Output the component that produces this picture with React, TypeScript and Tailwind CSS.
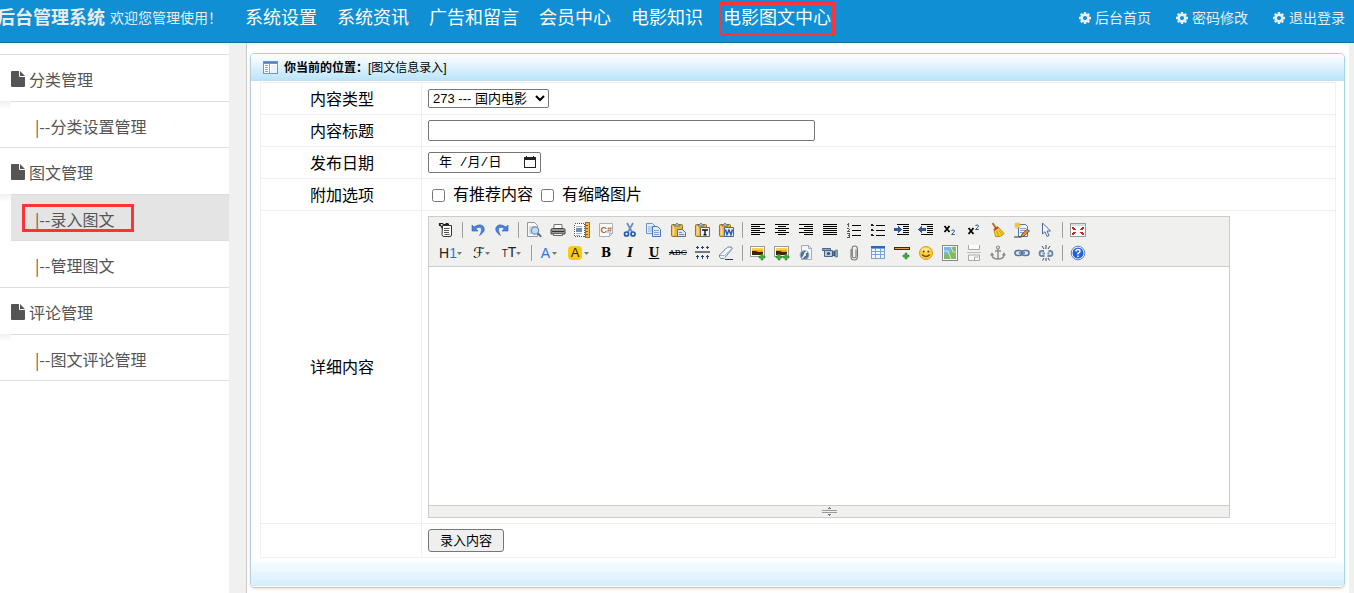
import type { ReactNode } from 'react';
import clsx from 'clsx';

const NAV = ['系统设置', '系统资讯', '广告和留言', '会员中心', '电影知识', '电影图文中心'];
const ACTIONS = ['后台首页', '密码修改', '退出登录'];
const MENU = [
  { title: '分类管理', items: ['分类设置管理'] },
  { title: '图文管理', items: ['录入图文', '管理图文'] },
  { title: '评论管理', items: ['图文评论管理'] },
];
const ACTIVE_NAV = '电影图文中心';
const ACTIVE_ITEM = '录入图文';

function Svg({ children, crisp = false }: { children: ReactNode; crisp?: boolean }) {
  return (
    <svg viewBox="0 0 16 16" className="w-4 h-4 block" fill="none" shapeRendering={crisp ? 'crispEdges' : 'auto'} aria-hidden="true">
      {children}
    </svg>
  );
}

function CogIcon() {
  return (
    <svg viewBox="0 128 1536 1536" className="w-3 h-3" fill="currentColor" aria-hidden="true">
      <path d="M1024 896q0-106-75-181t-181-75-181 75-75 181 75 181 181 75 181-75 75-181zm512-109v222q0 12-8 23t-20 13l-185 28q-19 54-39 91 35 50 107 138 10 12 10 25t-9 23q-27 37-99 108t-94 71q-12 0-26-9l-138-108q-44 23-91 38-16 136-29 186-7 28-36 28h-222q-14 0-24.5-8.5t-11.5-21.5l-28-184q-49-16-90-37l-141 107q-10 9-25 9-14 0-25-11-126-114-165-168-7-10-7-23 0-12 8-23 15-21 51-66.5t54-70.5q-27-50-41-99l-183-27q-13-2-21-12.5t-8-23.5v-222q0-12 8-23t19-13l186-28q14-46 39-92-40-57-107-138-10-12-10-24 0-10 9-23 26-36 98.5-107.5t94.5-71.5q13 0 26 10l138 107q44-23 91-38 16-136 29-186 7-28 36-28h222q14 0 24.5 8.5t11.5 21.5l28 184q49 16 90 37l142-107q9-9 24-9 13 0 25 10 129 119 165 170 7 8 7 22 0 12-8 23-15 21-51 66.5t-54 70.5q26 50 41 98l183 28q13 2 21 12.5t8 23.5z" />
    </svg>
  );
}

function FileIcon() {
  return (
    <svg viewBox="0 0 14 16" className="w-3.5 h-4" fill="currentColor" aria-hidden="true">
      <path d="M0 1Q0 0 1 0H8V5Q8 6 9 6H14V15Q14 16 13 16H1Q0 16 0 15ZM9 0.2Q9.5 0.4 10 1L13 4Q13.6 4.5 13.8 5H9Z" />
    </svg>
  );
}

function PanelIcon() {
  return (
    <svg viewBox="0 0 15 13" className="w-[15px] h-[13px]" shapeRendering="crispEdges" aria-hidden="true">
      <rect width="15" height="13" fill="#6d97d0" />
      <rect x="1" y="3" width="13" height="9" fill="#fff" />
      <rect x="1" y="1" width="13" height="1" fill="#4d7cc4" />
      <path fill="#7fa3cf" d="M2 4h3v1H2zM2 6h3v1H2zM2 8h3v1H2zM2 10h3v1H2zM6 3h1v9H6z" />
      <rect x="8" y="4" width="6" height="8" fill="#eaf2fb" />
    </svg>
  );
}

const clipboard = (
  <>
    <rect x="1.5" y="2.5" width="11" height="12" rx="1" fill="#e8b53c" stroke="#9a7420" />
    <rect x="2.5" y="4" width="2" height="9" fill="#f8dc86" />
    <path d="M4 4V2.5h1.5Q7 0 8.5 2.5H10V4z" fill="#c9cdd3" stroke="#6b6f76" />
  </>
);

const photo = (
  <>
    <rect x="0.5" y="1.5" width="14" height="10" fill="#fff" stroke="#9a9a9a" />
    <rect x="2" y="3" width="11" height="7" fill="#f2a71c" />
    <rect x="2" y="3" width="11" height="2" fill="#fbd251" />
    <path d="M2 6h4l2 1h5v3H2z" fill="#3d2408" />
  </>
);

const plus = (x: number, y: number) => (
  <path d={`M${x + 2} ${y}h2v2h2v2h-2v2h-2v-2h-2v-2h2z`} fill="#3fae3a" stroke="#1f7a20" strokeWidth="0.5" />
);

const lines = (rows: [number, number][], step = 2, top = 2) => (
  <>
    {rows.map(([x, w], i) => (
      <rect key={i} x={x} y={top + i * step} width={w} height="1" fill="#000" />
    ))}
  </>
);

const chain = (
  <g stroke="#5a769e" strokeWidth="1.6">
    <rect x="1" y="5.5" width="7" height="5" rx="2.5" fill="#dce6f2" />
    <rect x="8" y="5.5" width="7" height="5" rx="2.5" fill="#dce6f2" />
    <path d="M5 8h6" />
  </g>
);

const undo = (
  <path d="M2 3v6h6L5.7 6.8Q8 4.5 10.5 5.5Q13 7.5 9.5 13.5Q15.5 9.5 14 5.5Q11.5 0.5 4 5z" fill="#4b82dc" stroke="#2e5fb5" strokeWidth="0.6" />
);

type Tool = { name: string; icon: ReactNode; width?: string } | null;

function Caret() {
  return (
    <svg viewBox="0 0 5 3" className="w-[5px] h-[3px] shrink-0" aria-hidden="true">
      <path d="M0 0h5L2.5 3z" fill="#777" />
    </svg>
  );
}

const ROW1: Tool[] = [
  {
    name: '源代码',
    icon: (
      <Svg>
        <path d="M4.500 3.500h9v9.500q0 1.500-1.500 1.500H6q-2 0-2-2z" fill="#fff" stroke="#333" />
        <path d="M1.500 1.500l3 5M1.500 4V1.500h3l2 2M6 2.500h5M7.500 1.500h3" stroke="#222" strokeWidth="1.2" />
        <path d="M6 6.500h5.500M6 8.500h5M6 10.500h5M6.500 12.500h5" stroke="#555" />
      </Svg>
    ),
  },
  null,
  { name: '后退', icon: <Svg>{undo}</Svg> },
  { name: '前进', icon: <Svg><g transform="translate(16 0) scale(-1 1)">{undo}</g></Svg> },
  null,
  {
    name: '预览',
    icon: (
      <Svg>
        <path d="M1.500 0.500h7l3 3v11h-10z" fill="#f8fafc" stroke="#8e9aab" />
        <path d="M3 5h5M3 7h3M3 9h3M3 11h3" stroke="#a9b8cc" />
        <circle cx="9" cy="8.5" r="3.7" fill="#c3dcf5" stroke="#7088a8" strokeWidth="1.2" />
        <path d="M11.800 11.300l3.400 3.500" stroke="#5d7190" strokeWidth="2" />
      </Svg>
    ),
  },
  {
    name: '打印',
    icon: (
      <Svg>
        <path d="M4 2.500h8v5H4z" fill="#fff" stroke="#777" />
        <path d="M1 8q0-1.500 1.500-1.500h11Q15 6.500 15 8v4H1z" fill="#999" stroke="#444" />
        <path d="M2 9.500h12" stroke="#333" />
        <path d="M3.500 11.500h9v2h-9z" fill="#eee" stroke="#666" />
      </Svg>
    ),
  },
  {
    name: '插入模板',
    icon: (
      <Svg crisp>
        <rect x="0" y="1" width="11" height="14" fill="#fff" />
        <rect x="0.5" y="1.5" width="10" height="13" stroke="#555" strokeDasharray="1 1" />
        <path d="M2 4h6v1H2zM2 11h6v1H2zM2 13h4v1H2z" fill="#9db4d4" />
        <rect x="2" y="6" width="6" height="4" fill="#6d8fc0" />
        <rect x="11.5" y="0.5" width="4" height="15" fill="#f2b74a" stroke="#a8701c" />
        <path d="M12 3h2v1h-2zM12 6h2v1h-2zM12 9h2v1h-2zM12 12h2v1h-2z" fill="#8a5a14" />
      </Svg>
    ),
  },
  {
    name: '插入程序代码',
    icon: (
      <Svg>
        <path d="M1.500 1.500h13v10l-3 3h-10z" fill="#fbfbfb" stroke="#a8b0ba" />
        <path d="M14.500 11.500h-3v3" stroke="#a8b0ba" />
        <text x="2.5" y="10.5" fontSize="9" fontWeight="700" fill="#a4652a" fontFamily="Liberation Sans, sans-serif">C#</text>
      </Svg>
    ),
  },
  {
    name: '剪切',
    icon: (
      <Svg>
        <path d="M5 1l5 9M11 1L6 10" stroke="#6f8fc0" strokeWidth="1.8" />
        <circle cx="4.5" cy="12" r="2" stroke="#2559b0" strokeWidth="1.7" />
        <circle cx="11" cy="12" r="2" stroke="#2559b0" strokeWidth="1.7" />
      </Svg>
    ),
  },
  {
    name: '复制',
    icon: (
      <Svg>
        <path d="M0.500 1.500h6l3 3v7h-9z" fill="#e4eefb" stroke="#6a93cf" />
        <path d="M2 5h5M2 7h4M2 9h4" stroke="#8fb0de" />
        <path d="M6.500 4.500h5l3 3v7h-8z" fill="#e4eefb" stroke="#4474bd" />
        <path d="M8 8.500h5M8 10.500h5M8 12.500h5" stroke="#7ba1d8" />
      </Svg>
    ),
  },
  {
    name: '粘贴',
    icon: (
      <Svg>
        {clipboard}
        <path d="M7.500 7.500h5l3 3v4h-8z" fill="#dce5ef" stroke="#5d7186" />
        <path d="M9 10.500h3M9 12.500h5" stroke="#7d92aa" />
      </Svg>
    ),
  },
  {
    name: '粘贴为无格式文本',
    icon: (
      <Svg>
        {clipboard}
        <path d="M6.500 5.500h9v9h-9z" fill="#f0f2f5" stroke="#666" />
        <path d="M8 8h6M11 7.500v5.500M9.500 12.800h3" stroke="#111" strokeWidth="1.4" />
      </Svg>
    ),
  },
  {
    name: '从Word粘贴',
    icon: (
      <Svg>
        {clipboard}
        <path d="M6.500 5.500h9v9h-9z" fill="#e9f1fd" stroke="#3e68ad" />
        <path d="M7.500 7.500l1.500 5L11 8l2 4.500 1.500-5" stroke="#2458b4" strokeWidth="1.5" />
      </Svg>
    ),
  },
  null,
  { name: '左对齐', icon: <Svg crisp>{lines([[1, 14], [1, 9], [1, 14], [1, 9], [1, 14], [1, 9]])}</Svg> },
  { name: '居中', icon: <Svg crisp>{lines([[1, 14], [4, 8], [1, 14], [4, 8], [1, 14], [4, 8]])}</Svg> },
  { name: '右对齐', icon: <Svg crisp>{lines([[1, 14], [6, 9], [1, 14], [6, 9], [1, 14], [6, 9]])}</Svg> },
  { name: '两端对齐', icon: <Svg crisp>{lines([[1, 14], [1, 14], [1, 14], [1, 14], [1, 14], [1, 14]])}</Svg> },
  {
    name: '编号',
    icon: (
      <Svg crisp>
        {lines([[6, 9], [6, 9], [6, 9]], 5, 3)}
        <path fill="#555" d="M2 1h1v4H2zM1 2h1v1H1zM1 6h2v1H1zM3 7h1v1H3zM2 8h1v1H2zM1 9h3v1H1zM1 11h3v1H1zM2 13h2v1H2zM3 12h1v3H3zM1 15h3v1H1z" />
      </Svg>
    ),
  },
  {
    name: '项目符号',
    icon: (
      <Svg crisp>
        {lines([[6, 9], [6, 9], [6, 9]], 5, 3)}
        <path fill="#222" d="M1 2h2v1H1zM1 3h3v1H1zM1 7h2v1H1zM1 8h3v1H1zM1 12h2v1H1zM1 13h3v1H1z" />
      </Svg>
    ),
  },
  {
    name: '增加缩进',
    icon: (
      <Svg crisp>
        {lines([[3, 12], [9, 6], [9, 6], [9, 6], [9, 6], [3, 12]])}
        <path d="M0 6h4V4l4 3.500L4 11V9H0z" fill="#33599a" />
      </Svg>
    ),
  },
  {
    name: '减少缩进',
    icon: (
      <Svg crisp>
        {lines([[3, 12], [9, 6], [9, 6], [9, 6], [9, 6], [3, 12]])}
        <path d="M8 6H4V4L0 7.500 4 11V9h4z" fill="#33599a" />
      </Svg>
    ),
  },
  {
    name: '下标',
    icon: (
      <Svg>
        <path d="M2.500 4l5 6M7.500 4l-5 6" stroke="#000" strokeWidth="1.8" />
        <path d="M9.500 9q0-1 1.500-1t1.500 1q0 1-3 3.500h3.200" stroke="#33599a" />
      </Svg>
    ),
  },
  {
    name: '上标',
    icon: (
      <Svg>
        <path d="M2.500 6l5 6M7.500 6l-5 6" stroke="#000" strokeWidth="1.8" />
        <path d="M9.500 4q0-1 1.500-1t1.500 1q0 1-3 3.500h3.200" stroke="#33599a" />
      </Svg>
    ),
  },
  {
    name: '清理HTML代码',
    icon: (
      <Svg>
        <path d="M2.500 1l4 6" stroke="#b2702a" strokeWidth="2" />
        <path d="M4 8l4-3 6 6.500Q11 15.500 5.500 14.500z" fill="#f5cf2c" stroke="#b98f12" />
        <path d="M4 8l4-3" stroke="#c8382a" strokeWidth="2" />
        <path d="M7 9l1.500 5M9 8.500l3 4" stroke="#c79c17" />
      </Svg>
    ),
  },
  {
    name: '一键排版',
    icon: (
      <Svg>
        <path d="M4.500 2.500h7l2 2v10h-9z" fill="#eef4fb" stroke="#5873a0" />
        <path d="M6 6.500h6M6 8.500h6M6 10.500h4" stroke="#88a2c9" />
        <path d="M3.500 0v7M0 3.500h7M1 1l5 5M6 1L1 6" stroke="#f3c93a" strokeWidth="1.4" />
        <path d="M15.500 9l-5.500 5-3 1 1-3 5-4.500z" fill="#e98f3a" stroke="#6f3d18" strokeWidth="0.8" />
        <path d="M0 15h7" stroke="#333" />
      </Svg>
    ),
  },
  {
    name: '全选',
    icon: (
      <Svg>
        <path d="M4.500 1v11l2.500-2.300 2 4.800 2-1-2-4.500h3.500z" fill="#f4f8fe" stroke="#506a96" />
      </Svg>
    ),
  },
  null,
  {
    name: '全屏显示',
    icon: (
      <Svg crisp>
        <rect x="0.5" y="1.5" width="15" height="13" fill="#fff" stroke="#999" />
        <rect x="1" y="2" width="14" height="2" fill="#dcdcdc" />
        <path fill="#c8272d" d="M2 5h2v1h1v1h1v1H3V7H2zM14 5h-2v1h-1v1h-1v1h3V7h1zM2 13h2v-1h1v-1h1v-1H3v1H2zM14 13h-2v-1h-1v-1h-1v-1h3v1h1z" />
      </Svg>
    ),
  },
];

const ROW2: Tool[] = [
  {
    name: '段落',
    width: 'w-[33px]',
    icon: (
      <span className="flex items-center text-[14px] leading-4 font-['Liberation_Sans',sans-serif] text-[#222]">
        <span>H<span className="text-[#2f74dd]">1</span></span>
        <Caret />
      </span>
    ),
  },
  {
    name: '字体',
    width: 'w-[29px]',
    icon: (
      <span className="flex items-center text-[15px] leading-4 font-['DejaVu_Sans',sans-serif] text-[#111]">
        ℱ<Caret />
      </span>
    ),
  },
  {
    name: '文字大小',
    width: 'w-[31px]',
    icon: (
      <span className="flex items-center leading-4 font-['Liberation_Sans',sans-serif] text-[#222]">
        <span className="text-[14px]"><span className="text-[10px]">T</span>T</span>
        <Caret />
      </span>
    ),
  },
  null,
  {
    name: '文字颜色',
    width: 'w-7',
    icon: (
      <span className="flex items-center gap-0.5 text-[14px] leading-4 font-['Liberation_Sans',sans-serif] text-[#2f74dd]">
        A<Caret />
      </span>
    ),
  },
  {
    name: '文字背景',
    width: 'w-[31px]',
    icon: (
      <span className="flex items-center gap-0.5 text-[13px] font-['Liberation_Sans',sans-serif] text-[#222]">
        <span className="w-3.5 h-3.5 leading-[14px] text-center rounded-sm bg-[#ffc90e]">A</span>
        <Caret />
      </span>
    ),
  },
  { name: '粗体', icon: <b className="block text-[12px] leading-4 font-['DejaVu_Serif',serif] text-black text-center">B</b> },
  { name: '斜体', icon: <b className="block text-[12px] leading-4 italic font-['DejaVu_Serif',serif] text-black text-center">I</b> },
  { name: '下划线', icon: <b className="block text-[12px] leading-4 underline font-['DejaVu_Serif',serif] text-black text-center">U</b> },
  { name: '删除线', icon: <s className="block text-[8px] leading-4 font-['DejaVu_Serif',serif] text-black text-center">ABC</s> },
  {
    name: '行距',
    icon: (
      <Svg crisp>
        <rect x="1" y="6" width="15" height="2" fill="#777" />
        <path fill="#2d4468" d="M2 2h3v1H2zM3 1h1v3H3zM7 2h3v1H7zM8 1h1v3H8zM12 2h3v1h-3zM13 1h1v3h-1zM2 11h3v1H2zM3 10h1v4H3zM7 11h3v1H7zM8 10h1v4H8zM12 11h3v1h-3zM13 10h1v4h-1z" />
      </Svg>
    ),
  },
  {
    name: '删除格式',
    icon: (
      <Svg>
        <path d="M1.500 10l7-7q1-1 2.500-1h2q1.500 0.500 1 2l-7 8.500q-.5 1-2 1H3Q.8 12.500 1.500 10z" fill="#f4f7fc" stroke="#6680ad" />
        <path d="M2 10.500h4.500L14 3.500" stroke="#9db0d0" />
        <path d="M7 14.500h8" stroke="#333" />
      </Svg>
    ),
  },
  null,
  { name: '图片', icon: <Svg>{photo}{plus(9, 9)}</Svg> },
  { name: '批量图片上传', icon: <Svg>{photo}{plus(2, 9)}{plus(9, 9)}</Svg> },
  {
    name: 'Flash',
    icon: (
      <Svg>
        <path d="M3.500 0.500h7l3 3v11h-10z" fill="#f4f6f9" stroke="#a2aab5" />
        <path d="M10.500 0.500v3h3" stroke="#a2aab5" />
        <circle cx="6.5" cy="10" r="4.5" fill="#4f7199" stroke="#a9bacd" />
        <path d="M9 7q-2 0-2.500 2.500T4 13M5.500 10H8" stroke="#fff" strokeWidth="1.3" />
      </Svg>
    ),
  },
  {
    name: '视音频',
    icon: (
      <Svg>
        <path d="M0.500 3.500h8v2h-8z" fill="#8ba4c4" stroke="#4b6487" />
        <path d="M2.500 5.500h8v6h-8z" fill="#b7c8dd" stroke="#4b6487" />
        <path d="M10.500 7.500l2-1.500v5l-2-1z" fill="#5d7ba4" stroke="#3f5676" />
        <rect x="13" y="5" width="3" height="7" rx="1" fill="#8ba4c4" stroke="#3f5676" strokeWidth="0.6" />
        <circle cx="6.5" cy="8.5" r="1.5" fill="#34507a" />
      </Svg>
    ),
  },
  {
    name: '插入文件',
    icon: (
      <Svg>
        <path d="M4.500 4v8q0 3 3.200 3t3.300-3V4q0-3-2.800-3T5.800 3.500V11q0 1.800 1.900 1.800T9.500 11V4.500" transform="translate(0.5 0)" stroke="#777" strokeWidth="1.1" />
      </Svg>
    ),
  },
  {
    name: '表格',
    icon: (
      <Svg crisp>
        <rect x="1" y="1" width="14" height="13" fill="#7ba0e0" />
        <rect x="1" y="1" width="14" height="2" fill="#2f66c4" />
        <path fill="#f2f7ff" d="M2 4h3v2H2zM6 4h4v2H6zM11 4h3v2h-3zM2 7h3v2H2zM6 7h4v2H6zM11 7h3v2h-3zM2 10h3v3H2zM6 10h4v3H6zM11 10h3v3h-3z" />
      </Svg>
    ),
  },
  {
    name: '插入横线',
    icon: (
      <Svg>
        <path d="M0 2h16v3H0z" fill="#3d2a10" />
        <path d="M1 3h14v1H1z" fill="#dd9c48" />
        {plus(9, 8)}
      </Svg>
    ),
  },
  {
    name: '插入表情',
    icon: (
      <Svg>
        <circle cx="8" cy="8" r="6.5" fill="#ffce3a" stroke="#e39a18" />
        <ellipse cx="7.5" cy="5" rx="4" ry="2.3" fill="#ffe88c" />
        <circle cx="5.7" cy="6.5" r="1" fill="#5a3a0a" />
        <circle cx="10.3" cy="6.5" r="1" fill="#5a3a0a" />
        <path d="M4 9.500q4 4 8 0" stroke="#7a4b0c" strokeWidth="1.2" />
      </Svg>
    ),
  },
  {
    name: '百度地图',
    icon: (
      <Svg>
        <rect x="0.5" y="0.5" width="15" height="15" fill="#fff" stroke="#888" />
        <rect x="2" y="2" width="12" height="12" fill="#79b8e6" />
        <path d="M2 10q2-2 4-1t3-4 5-3v12H2z" fill="#82b968" />
        <path d="M2 6h4l3 8M9 2l2 5h3" stroke="#e5eec0" strokeWidth="0.9" />
      </Svg>
    ),
  },
  {
    name: '插入分页符',
    icon: (
      <Svg>
        <path d="M2.500 0v4.500h11V0" fill="#fff" stroke="#aaa" />
        <path d="M1 7.500h14" stroke="#bbb" />
        <path d="M2.500 15.500v-5.500h11v5.500z" fill="#fafafa" stroke="#aaa" />
        <path d="M8.500 15v-3h4" stroke="#aaa" />
      </Svg>
    ),
  },
  {
    name: '锚点',
    icon: (
      <Svg>
        <circle cx="8" cy="2.5" r="1.5" stroke="#8d8d8d" strokeWidth="1.2" />
        <path d="M8 4v10M5 6h6M2 9.500q0 4.500 6 4.500t6-4.500M0.800 10.500l1.200-2 1.500 2M12.500 10.500l1.500-2 1.200 2" stroke="#8d8d8d" strokeWidth="1.5" />
      </Svg>
    ),
  },
  { name: '超级链接', icon: <Svg>{chain}</Svg> },
  {
    name: '取消超级链接',
    icon: (
      <Svg>
        <g stroke="#6d87ac" strokeWidth="1.8">
          <path d="M6.500 11H4q-2.500 0-2.500-2.500T4 6h2M9.500 11H12q2.500 0 2.500-2.500T12 6h-1.500M4.500 8.500H7M9.500 8.500h2" />
        </g>
        <path d="M8 0v4M4 1l2 3M12 1l-2 3M8 13v3M4.500 15.500l1.500-2.500M11.500 15.500L10 13" stroke="#33496c" />
      </Svg>
    ),
  },
  null,
  {
    name: '关于',
    icon: (
      <Svg>
        <circle cx="8" cy="8" r="6.8" fill="#fff" stroke="#5a7fc0" />
        <circle cx="8" cy="8" r="5.5" fill="#2362dd" />
        <path d="M6 6.500Q6 4.500 8 4.500t2 1.700Q10 7.300 8 8.500v1M8 10.500v1.500" stroke="#fff" strokeWidth="1.5" />
      </Svg>
    ),
  },
];

function ToolRow({ tools }: { tools: Tool[] }) {
  return (
    <div className="flex h-4">
      {tools.map((tool, i) =>
        tool ? (
          <button key={i} type="button" title={tool.name} aria-label={tool.name} className={clsx('flex justify-center items-center h-4 shrink-0', tool.width ?? 'w-6')}>
            {tool.icon}
          </button>
        ) : (
          <span key={i} className="w-2 shrink-0 flex justify-center">
            <span className="w-px h-4 bg-[#a0a0a0]" />
          </span>
        ),
      )}
    </div>
  );
}

function Editor() {
  return (
    <div className="max-w-[802px] border border-[#ccc] bg-white">
      <div className="flex flex-col gap-[7px] p-[5px] bg-[#f0f0ee] border-b border-[#ccc] overflow-hidden">
        <ToolRow tools={ROW1} />
        <ToolRow tools={ROW2} />
      </div>
      <textarea id="content" className="block w-full h-[238px] resize-none outline-none p-1" />
      <div className="flex justify-center items-center h-3 bg-[#f0f0ee] border-t border-[#ccc]">
        <svg viewBox="0 0 15 9" className="w-[15px] h-[9px]" shapeRendering="crispEdges" aria-hidden="true">
          <path fill="#777" d="M7 0h1v1H7zM6 1h3v1H6zM6 7h3v1H6zM7 8h1v1H7z" />
          <path fill="#999" d="M0 3h15v1H0zM0 5h15v1H0z" />
        </svg>
      </div>
    </div>
  );
}

function Row({ label, htmlFor, children }: { label?: string; htmlFor?: string; children: ReactNode }) {
  return (
    <tr className="h-8">
      <th scope="row" className="w-[161px] border border-[#f0f0f0] pt-0.5 pl-0.5 font-normal text-center">
        {label && <label htmlFor={htmlFor}>{label}</label>}
      </th>
      <td className="border border-[#f0f0f0] px-1.5">{children}</td>
    </tr>
  );
}

function Header() {
  return (
    <header className="flex items-start h-[43px] bg-[#108fd4] border-b border-[#0d6fa5] text-[#e9edf0] whitespace-nowrap">
      <div className="flex items-center h-9 w-[245px] shrink-0">
        <h1 className="-ml-[3px] text-lg font-bold">后台管理系统</h1>
        <p className="ml-[5px] text-sm">欢迎您管理使用！</p>
      </div>
      <nav className="flex items-center h-9 gap-5 text-lg text-white">
        {NAV.map((name) => (
          <a key={name} href="#" className="relative">
            {name}
            {name === ACTIVE_NAV && <span className="absolute -inset-x-1 -top-0.5 -bottom-1 border-[3px] border-[#fb3535]" />}
          </a>
        ))}
      </nav>
      <div className="flex items-center h-9 gap-[25px] ml-auto pr-[9px] text-sm">
        {ACTIONS.map((name) => (
          <a key={name} href="#" className="flex items-center gap-1">
            <CogIcon />
            {name}
          </a>
        ))}
      </div>
    </header>
  );
}

function Sidebar() {
  return (
    <aside className="w-[229px] shrink-0 bg-white pt-[11px] text-base text-[#555] font-['Noto_Sans_CJK_SC',sans-serif]">
      {MENU.map((group) => (
        <section key={group.title} className="border-t border-[#ddd]">
          <h2 className="flex items-center gap-1 h-[46px] pt-0.5 pl-[11px]">
            <FileIcon />
            {group.title}
          </h2>
          <div className="pl-[11px] bg-linear-to-b from-[#f0f0f0] to-white to-[8px]">
            <ul>
              {group.items.map((item, i) => (
                <li key={item} className={clsx('border-t border-[#ddd]', item === ACTIVE_ITEM ? 'bg-[#e4e4e4]' : 'bg-white')}>
                  <a href="#" className={clsx('flex items-center pt-0.5 pl-6', i === 0 ? 'h-[45px]' : 'h-[46px]')}>
                    <span className="relative leading-6">
                      |--{item}
                      {item === ACTIVE_ITEM && <span className="absolute -left-[13px] -right-5 -top-[3px] -bottom-px border-[3px] border-[#fb3535]" />}
                    </span>
                  </a>
                </li>
              ))}
            </ul>
          </div>
        </section>
      ))}
      <div className="border-t border-[#ddd]" />
    </aside>
  );
}

function EntryForm() {
  return (
    <form className="ml-[9px] mr-2 mt-px">
      <table className="w-full border-collapse text-base text-black">
        <tbody>
          <Row label="内容类型" htmlFor="type">
            <select id="type" className="block w-[121px] h-[19px] border border-[#767676] rounded-xs bg-white text-[13px] leading-4">
              <option>273 --- 国内电影</option>
            </select>
          </Row>
          <Row label="内容标题" htmlFor="title">
            <input id="title" type="text" className="block w-[387px] max-w-full h-[21px] px-1 border border-[#767676] rounded-xs bg-white text-[13px]" />
          </Row>
          <Row label="发布日期" htmlFor="date">
            <div className="flex items-center w-[113px] h-[21px] pl-2.5 pr-1 border border-[#767676] rounded-xs bg-white">
              <input id="date" type="text" defaultValue="年 /月/日" className="grow min-w-0 h-[19px] text-[13px] font-['Liberation_Mono','Noto_Sans_CJK_SC',monospace]" />
              <button type="button" aria-label="选择日期" className="shrink-0">
                <svg viewBox="0 0 12 13" className="w-3 h-[13px]" shapeRendering="crispEdges" aria-hidden="true">
                  <path fill="#222" fillRule="evenodd" d="M2 0h1v1h6V0h1v1h2v11H0V1h2zM1 4v7h10V4z" />
                </svg>
              </button>
            </div>
          </Row>
          <Row label="附加选项">
            <div className="flex items-center gap-2 pt-px pl-1">
              <label className="flex items-center gap-2">
                <input type="checkbox" className="w-[13px] h-[13px]" />
                有推荐内容
              </label>
              <label className="flex items-center gap-2">
                <input type="checkbox" className="w-[13px] h-[13px]" />
                有缩略图片
              </label>
            </div>
          </Row>
          <Row label="详细内容" htmlFor="content">
            <div className="py-[5px]">
              <Editor />
            </div>
          </Row>
          <Row>
            <div className="py-[5px]">
              <button type="submit" className="block h-[23px] px-[11px] border border-[#767676] rounded-[3px] bg-[#efefef] text-[13px] leading-5">
                录入内容
              </button>
            </div>
          </Row>
        </tbody>
      </table>
    </form>
  );
}

export default function App() {
  return (
    <div className="min-h-screen flex flex-col bg-white font-['Liberation_Sans','Noto_Sans_CJK_SC',sans-serif]">
      <Header />
      <div className="flex grow">
        <Sidebar />
        <div className="w-[17px] shrink-0 bg-[#f0f0f0]" />
        <main className="grow min-w-0 border-l border-[#c8c8c8] pl-[3px] pr-1 pt-2.5 pb-1">
          <div className="rounded-[5px] border border-[#a5d2ee] border-l-[#b9cbd6] shadow-sm overflow-hidden">
            <div className="flex items-center gap-1.5 h-[27px] pl-3 bg-linear-to-b from-white to-[#b9e3fa] text-xs text-black">
              <PanelIcon />
              <h2>
                <b>你当前的位置：</b>[图文信息录入]
              </h2>
            </div>
            <EntryForm />
            <div className="h-[29px] bg-linear-to-b from-white to-[#d3edfd] border-b border-white" />
          </div>
        </main>
        <div className="w-[5px] shrink-0 bg-[#f0f0f0]" />
      </div>
    </div>
  );
}
